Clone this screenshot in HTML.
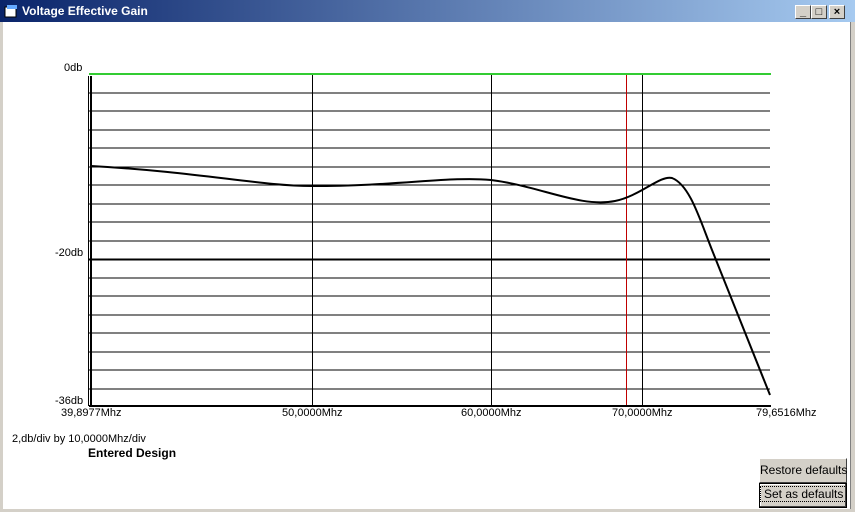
<!DOCTYPE html>
<html><head><style>
body{margin:0;width:855px;height:512px;overflow:hidden;background:#fff;font-family:"Liberation Sans",Arial,sans-serif;font-size:11px;}
.win{position:absolute;left:0;top:0;width:855px;height:512px;background:#fff;}
.title{position:absolute;left:0;top:0;width:855px;height:22px;background:linear-gradient(to right,#0a246a,#a6caf0);}
.title span{position:absolute;left:22px;top:4px;color:#fff;font-weight:bold;font-size:12px;}
.bl{position:absolute;left:0;top:22px;width:3px;height:490px;background:#d4d0c8;}
.br{position:absolute;right:0;top:22px;width:4px;height:490px;background:#d4d0c8;border-left:1px solid #808080;}
.bb{position:absolute;left:0;bottom:0;width:855px;height:3px;background:#d4d0c8;}
.tb{position:absolute;top:5px;width:14px;height:12px;background:#d4d0c8;border:1px solid;border-color:#fff #404040 #404040 #fff;font-size:11px;line-height:12px;text-align:center;font-weight:bold;}
.lbl{position:absolute;font-size:11px;color:#000;white-space:nowrap;}
.btn{position:absolute;left:759px;width:88px;background:#d4d0c8;border:1px solid;border-color:#fff #404040 #404040 #fff;font-size:12px;text-align:center;box-sizing:border-box;white-space:nowrap;}
</style></head><body><div class="win">
<div class="title"><svg style="position:absolute;left:4px;top:4px" width="14" height="14"><rect x="1" y="3" width="11" height="10" fill="#fff" stroke="#000"/><rect x="3" y="1" width="10" height="4" fill="#6af"/></svg><span>Voltage Effective Gain</span></div>
<div class="tb" style="left:795px">_</div><div class="tb" style="left:811px">□</div><div class="tb" style="left:829px">×</div>
<div class="bl"></div><div class="br"></div><div class="bb"></div>
<svg style="position:absolute;left:0;top:0" width="855" height="512">
<g stroke="#000" stroke-width="1">
<line x1="89" y1="93" x2="770" y2="93"/><line x1="89" y1="111" x2="770" y2="111"/><line x1="89" y1="130" x2="770" y2="130"/><line x1="89" y1="148" x2="770" y2="148"/><line x1="89" y1="167" x2="770" y2="167"/><line x1="89" y1="185" x2="770" y2="185"/><line x1="89" y1="204" x2="770" y2="204"/><line x1="89" y1="222" x2="770" y2="222"/><line x1="89" y1="241" x2="770" y2="241"/>
<line x1="89" y1="278" x2="770" y2="278"/><line x1="89" y1="296" x2="770" y2="296"/><line x1="89" y1="315" x2="770" y2="315"/><line x1="89" y1="333" x2="770" y2="333"/><line x1="89" y1="352" x2="770" y2="352"/><line x1="89" y1="370" x2="770" y2="370"/><line x1="89" y1="389" x2="770" y2="389"/>
<line x1="312.5" y1="74" x2="312.5" y2="406"/><line x1="491.5" y1="74" x2="491.5" y2="406"/><line x1="642.5" y1="74" x2="642.5" y2="406"/>
</g>
<line x1="89" y1="259.5" x2="770" y2="259.5" stroke="#000" stroke-width="2"/>
<line x1="626.5" y1="74" x2="626.5" y2="406" stroke="#c00000" stroke-width="1"/>
<line x1="89" y1="74" x2="771" y2="74" stroke="#3c3" stroke-width="2"/>
<line x1="89" y1="406" x2="771" y2="406" stroke="#000" stroke-width="2"/>
<line x1="88.5" y1="76" x2="88.5" y2="406" stroke="#000" stroke-width="1"/>
<line x1="91" y1="76" x2="91" y2="406" stroke="#000" stroke-width="2"/>
<path d="M91,166 C200,172 260,186 312,186 C400,186 450,176 491,180 C540,186 580,208 615,201 C640,196 660,175 672,178 C690,185 700,220 712,250 L770,395" fill="none" stroke="#000" stroke-width="2"/>
</svg>
<div class="lbl" style="left:64px;top:62px">0db</div>
<div class="lbl" style="left:55px;top:247px">-20db</div>
<div class="lbl" style="left:55px;top:395px">-36db</div>
<div class="lbl" style="left:61px;top:407px">39,8977Mhz</div>
<div class="lbl" style="left:282px;top:407px">50,0000Mhz</div>
<div class="lbl" style="left:461px;top:407px">60,0000Mhz</div>
<div class="lbl" style="left:612px;top:407px">70,0000Mhz</div>
<div class="lbl" style="left:756px;top:407px">79,6516Mhz</div>
<div class="lbl" style="left:12px;top:433px">2,db/div by 10,0000Mhz/div</div>
<div class="lbl" style="left:88px;top:446px;font-weight:bold;font-size:12px">Entered Design</div>
<div class="btn" style="top:458px;height:25px;line-height:23px">Restore defaults</div>
<div class="btn" style="top:483px;height:25px;line-height:21px;border:1px solid #000;box-shadow:inset -1px -1px #404040,inset 1px 1px #fff"><span style="border:1px dotted #000;padding:0 3px">Set as defaults</span></div>
</div></body></html>
